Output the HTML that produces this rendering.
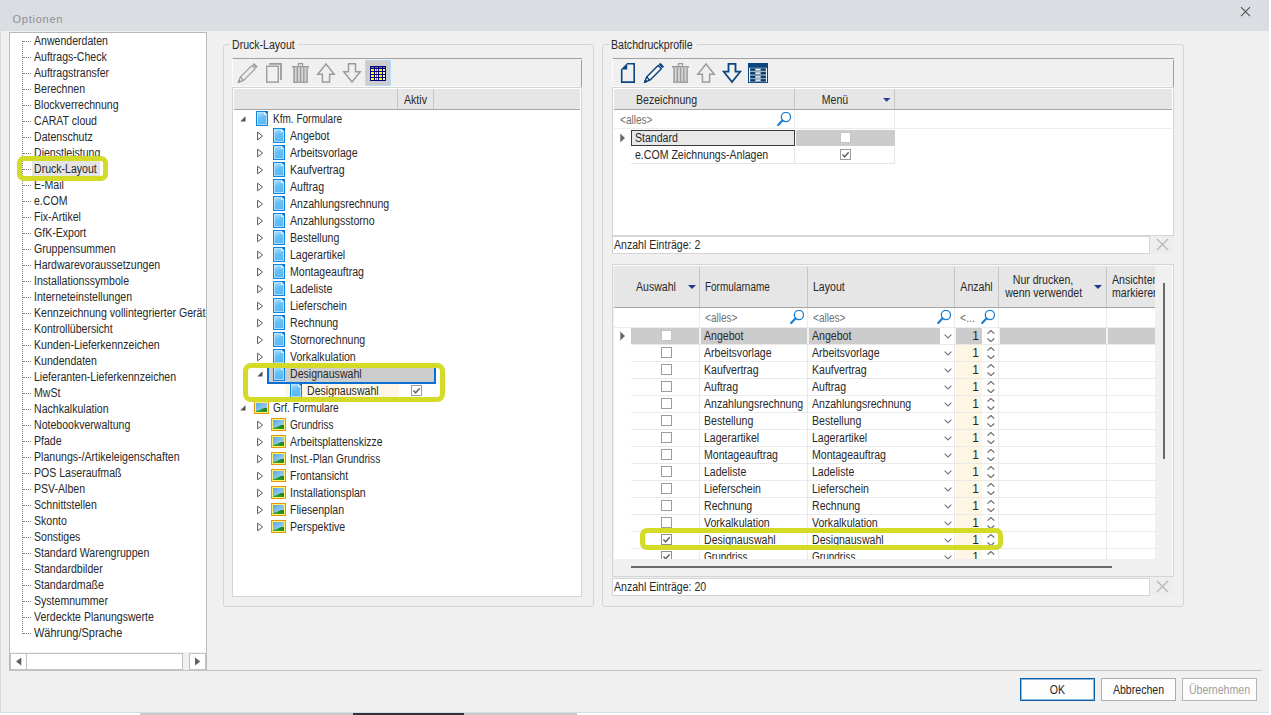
<!DOCTYPE html>
<html lang="de"><head><meta charset="utf-8"><title>Optionen</title>
<style>
html,body{margin:0;padding:0;background:#fff;}
body{width:1271px;height:715px;overflow:hidden;position:relative;font-family:"Liberation Sans",sans-serif;}
#dlg{position:absolute;left:0;top:0;width:1269px;height:713px;background:#f0f0f0;overflow:hidden;box-shadow:inset 1px -1px 0 #d8dbe0;}
#strip{position:absolute;left:140px;top:713px;width:437px;height:2px;background:#c9c9c9;}
#strip i{position:absolute;left:213px;top:0;width:111px;height:2px;background:#30343a;}
#dlg div,#dlg span.t,#dlg svg{position:absolute;box-sizing:border-box;}
span.t{white-space:nowrap;display:block;}

</style></head>
<body>
<div id="dlg">
<svg style="left:0;top:0" width="0" height="0"><defs><linearGradient id="gd" x1="0" y1="0" x2="0.25" y2="1"><stop offset="0" stop-color="#c2e7fc"/><stop offset="0.5" stop-color="#68c1f7"/><stop offset="1" stop-color="#58b8f5"/></linearGradient><linearGradient id="gs" x1="0" y1="0" x2="1" y2="1"><stop offset="0" stop-color="#5aa6e4"/><stop offset="0.5" stop-color="#86c2f0"/><stop offset="1" stop-color="#9fd0f4"/></linearGradient><linearGradient id="gg" x1="0" y1="1" x2="1" y2="0"><stop offset="0" stop-color="#3fb030"/><stop offset="1" stop-color="#0f7a14"/></linearGradient></defs></svg>
<div style="left:0px;top:0px;width:1269px;height:31px;background:#dadde2;"></div>
<span class="t" style="left:12.5px;top:10px;height:18px;line-height:18px;font-size:11px;color:#8f9094;transform:scaleX(1.0);transform-origin:0 0;letter-spacing:0.75px;">Optionen</span>
<svg style="left:1239px;top:6px" width="13" height="12" viewBox="0 0 13 12"><path d="M2 1.2 L11 10.2 M11 1.2 L2 10.2" stroke="#505050" stroke-width="1.1" fill="none"/></svg>
<div style="left:0px;top:31px;width:1px;height:682px;background:#d5d8dd;"></div>
<div style="left:9px;top:32px;width:198px;height:639px;background:#fff;border:1px solid #bababa;"></div>
<div style="left:10px;top:33px;width:196px;height:618px;overflow:hidden;">
<div style="left:12px;top:8px;width:1px;height:593px;border-left:1px dotted #808080;"></div>
<div style="left:13px;top:8px;width:8px;height:1px;border-top:1px dotted #808080;"></div>
<span class="t" style="left:24px;top:0px;height:16px;line-height:16px;font-size:12px;color:#282828;transform:scaleX(0.88);transform-origin:0 0;">Anwenderdaten</span>
<div style="left:13px;top:24px;width:8px;height:1px;border-top:1px dotted #808080;"></div>
<span class="t" style="left:24px;top:16px;height:16px;line-height:16px;font-size:12px;color:#282828;transform:scaleX(0.88);transform-origin:0 0;">Auftrags-Check</span>
<div style="left:13px;top:40px;width:8px;height:1px;border-top:1px dotted #808080;"></div>
<span class="t" style="left:24px;top:32px;height:16px;line-height:16px;font-size:12px;color:#282828;transform:scaleX(0.88);transform-origin:0 0;">Auftragstransfer</span>
<div style="left:13px;top:56px;width:8px;height:1px;border-top:1px dotted #808080;"></div>
<span class="t" style="left:24px;top:48px;height:16px;line-height:16px;font-size:12px;color:#282828;transform:scaleX(0.88);transform-origin:0 0;">Berechnen</span>
<div style="left:13px;top:72px;width:8px;height:1px;border-top:1px dotted #808080;"></div>
<span class="t" style="left:24px;top:64px;height:16px;line-height:16px;font-size:12px;color:#282828;transform:scaleX(0.88);transform-origin:0 0;">Blockverrechnung</span>
<div style="left:13px;top:88px;width:8px;height:1px;border-top:1px dotted #808080;"></div>
<span class="t" style="left:24px;top:80px;height:16px;line-height:16px;font-size:12px;color:#282828;transform:scaleX(0.88);transform-origin:0 0;">CARAT cloud</span>
<div style="left:13px;top:104px;width:8px;height:1px;border-top:1px dotted #808080;"></div>
<span class="t" style="left:24px;top:96px;height:16px;line-height:16px;font-size:12px;color:#282828;transform:scaleX(0.88);transform-origin:0 0;">Datenschutz</span>
<div style="left:13px;top:120px;width:8px;height:1px;border-top:1px dotted #808080;"></div>
<span class="t" style="left:24px;top:112px;height:16px;line-height:16px;font-size:12px;color:#282828;transform:scaleX(0.88);transform-origin:0 0;">Dienstleistung</span>
<div style="left:13px;top:136px;width:8px;height:1px;border-top:1px dotted #808080;"></div>
<div style="left:22px;top:128px;width:68px;height:16px;background:#e4e4e4;"></div>
<span class="t" style="left:24px;top:128px;height:16px;line-height:16px;font-size:12px;color:#282828;transform:scaleX(0.88);transform-origin:0 0;">Druck-Layout</span>
<div style="left:13px;top:152px;width:8px;height:1px;border-top:1px dotted #808080;"></div>
<span class="t" style="left:24px;top:144px;height:16px;line-height:16px;font-size:12px;color:#282828;transform:scaleX(0.88);transform-origin:0 0;">E-Mail</span>
<div style="left:13px;top:168px;width:8px;height:1px;border-top:1px dotted #808080;"></div>
<span class="t" style="left:24px;top:160px;height:16px;line-height:16px;font-size:12px;color:#282828;transform:scaleX(0.88);transform-origin:0 0;">e.COM</span>
<div style="left:13px;top:184px;width:8px;height:1px;border-top:1px dotted #808080;"></div>
<span class="t" style="left:24px;top:176px;height:16px;line-height:16px;font-size:12px;color:#282828;transform:scaleX(0.88);transform-origin:0 0;">Fix-Artikel</span>
<div style="left:13px;top:200px;width:8px;height:1px;border-top:1px dotted #808080;"></div>
<span class="t" style="left:24px;top:192px;height:16px;line-height:16px;font-size:12px;color:#282828;transform:scaleX(0.88);transform-origin:0 0;">GfK-Export</span>
<div style="left:13px;top:216px;width:8px;height:1px;border-top:1px dotted #808080;"></div>
<span class="t" style="left:24px;top:208px;height:16px;line-height:16px;font-size:12px;color:#282828;transform:scaleX(0.88);transform-origin:0 0;">Gruppensummen</span>
<div style="left:13px;top:232px;width:8px;height:1px;border-top:1px dotted #808080;"></div>
<span class="t" style="left:24px;top:224px;height:16px;line-height:16px;font-size:12px;color:#282828;transform:scaleX(0.88);transform-origin:0 0;">Hardwarevoraussetzungen</span>
<div style="left:13px;top:248px;width:8px;height:1px;border-top:1px dotted #808080;"></div>
<span class="t" style="left:24px;top:240px;height:16px;line-height:16px;font-size:12px;color:#282828;transform:scaleX(0.88);transform-origin:0 0;">Installationssymbole</span>
<div style="left:13px;top:264px;width:8px;height:1px;border-top:1px dotted #808080;"></div>
<span class="t" style="left:24px;top:256px;height:16px;line-height:16px;font-size:12px;color:#282828;transform:scaleX(0.88);transform-origin:0 0;">Interneteinstellungen</span>
<div style="left:13px;top:280px;width:8px;height:1px;border-top:1px dotted #808080;"></div>
<span class="t" style="left:24px;top:272px;height:16px;line-height:16px;font-size:12px;color:#282828;transform:scaleX(0.88);transform-origin:0 0;">Kennzeichnung vollintegrierter Geräte</span>
<div style="left:13px;top:296px;width:8px;height:1px;border-top:1px dotted #808080;"></div>
<span class="t" style="left:24px;top:288px;height:16px;line-height:16px;font-size:12px;color:#282828;transform:scaleX(0.88);transform-origin:0 0;">Kontrollübersicht</span>
<div style="left:13px;top:312px;width:8px;height:1px;border-top:1px dotted #808080;"></div>
<span class="t" style="left:24px;top:304px;height:16px;line-height:16px;font-size:12px;color:#282828;transform:scaleX(0.88);transform-origin:0 0;">Kunden-Lieferkennzeichen</span>
<div style="left:13px;top:328px;width:8px;height:1px;border-top:1px dotted #808080;"></div>
<span class="t" style="left:24px;top:320px;height:16px;line-height:16px;font-size:12px;color:#282828;transform:scaleX(0.88);transform-origin:0 0;">Kundendaten</span>
<div style="left:13px;top:344px;width:8px;height:1px;border-top:1px dotted #808080;"></div>
<span class="t" style="left:24px;top:336px;height:16px;line-height:16px;font-size:12px;color:#282828;transform:scaleX(0.88);transform-origin:0 0;">Lieferanten-Lieferkennzeichen</span>
<div style="left:13px;top:360px;width:8px;height:1px;border-top:1px dotted #808080;"></div>
<span class="t" style="left:24px;top:352px;height:16px;line-height:16px;font-size:12px;color:#282828;transform:scaleX(0.88);transform-origin:0 0;">MwSt</span>
<div style="left:13px;top:376px;width:8px;height:1px;border-top:1px dotted #808080;"></div>
<span class="t" style="left:24px;top:368px;height:16px;line-height:16px;font-size:12px;color:#282828;transform:scaleX(0.88);transform-origin:0 0;">Nachkalkulation</span>
<div style="left:13px;top:392px;width:8px;height:1px;border-top:1px dotted #808080;"></div>
<span class="t" style="left:24px;top:384px;height:16px;line-height:16px;font-size:12px;color:#282828;transform:scaleX(0.88);transform-origin:0 0;">Notebookverwaltung</span>
<div style="left:13px;top:408px;width:8px;height:1px;border-top:1px dotted #808080;"></div>
<span class="t" style="left:24px;top:400px;height:16px;line-height:16px;font-size:12px;color:#282828;transform:scaleX(0.88);transform-origin:0 0;">Pfade</span>
<div style="left:13px;top:424px;width:8px;height:1px;border-top:1px dotted #808080;"></div>
<span class="t" style="left:24px;top:416px;height:16px;line-height:16px;font-size:12px;color:#282828;transform:scaleX(0.88);transform-origin:0 0;">Planungs-/Artikeleigenschaften</span>
<div style="left:13px;top:440px;width:8px;height:1px;border-top:1px dotted #808080;"></div>
<span class="t" style="left:24px;top:432px;height:16px;line-height:16px;font-size:12px;color:#282828;transform:scaleX(0.88);transform-origin:0 0;">POS Laseraufmaß</span>
<div style="left:13px;top:456px;width:8px;height:1px;border-top:1px dotted #808080;"></div>
<span class="t" style="left:24px;top:448px;height:16px;line-height:16px;font-size:12px;color:#282828;transform:scaleX(0.88);transform-origin:0 0;">PSV-Alben</span>
<div style="left:13px;top:472px;width:8px;height:1px;border-top:1px dotted #808080;"></div>
<span class="t" style="left:24px;top:464px;height:16px;line-height:16px;font-size:12px;color:#282828;transform:scaleX(0.88);transform-origin:0 0;">Schnittstellen</span>
<div style="left:13px;top:488px;width:8px;height:1px;border-top:1px dotted #808080;"></div>
<span class="t" style="left:24px;top:480px;height:16px;line-height:16px;font-size:12px;color:#282828;transform:scaleX(0.88);transform-origin:0 0;">Skonto</span>
<div style="left:13px;top:504px;width:8px;height:1px;border-top:1px dotted #808080;"></div>
<span class="t" style="left:24px;top:496px;height:16px;line-height:16px;font-size:12px;color:#282828;transform:scaleX(0.88);transform-origin:0 0;">Sonstiges</span>
<div style="left:13px;top:520px;width:8px;height:1px;border-top:1px dotted #808080;"></div>
<span class="t" style="left:24px;top:512px;height:16px;line-height:16px;font-size:12px;color:#282828;transform:scaleX(0.88);transform-origin:0 0;">Standard Warengruppen</span>
<div style="left:13px;top:536px;width:8px;height:1px;border-top:1px dotted #808080;"></div>
<span class="t" style="left:24px;top:528px;height:16px;line-height:16px;font-size:12px;color:#282828;transform:scaleX(0.88);transform-origin:0 0;">Standardbilder</span>
<div style="left:13px;top:552px;width:8px;height:1px;border-top:1px dotted #808080;"></div>
<span class="t" style="left:24px;top:544px;height:16px;line-height:16px;font-size:12px;color:#282828;transform:scaleX(0.88);transform-origin:0 0;">Standardmaße</span>
<div style="left:13px;top:568px;width:8px;height:1px;border-top:1px dotted #808080;"></div>
<span class="t" style="left:24px;top:560px;height:16px;line-height:16px;font-size:12px;color:#282828;transform:scaleX(0.88);transform-origin:0 0;">Systemnummer</span>
<div style="left:13px;top:584px;width:8px;height:1px;border-top:1px dotted #808080;"></div>
<span class="t" style="left:24px;top:576px;height:16px;line-height:16px;font-size:12px;color:#282828;transform:scaleX(0.88);transform-origin:0 0;">Verdeckte Planungswerte</span>
<div style="left:13px;top:600px;width:8px;height:1px;border-top:1px dotted #808080;"></div>
<span class="t" style="left:24px;top:592px;height:16px;line-height:16px;font-size:12px;color:#282828;transform:scaleX(0.913);transform-origin:0 0;">Währung/Sprache</span>
</div>
<div style="left:17px;top:156px;width:91px;height:25px;border:5px solid #d3db26;border-radius:7px;"></div>
<div style="left:10px;top:652px;width:196px;height:18px;background:#f0f0f0;"></div>
<div style="left:10px;top:653px;width:17px;height:17px;background:#fff;border:1px solid #c2c2c2;"></div>
<div style="left:27px;top:653px;width:156px;height:17px;background:#fff;border:1px solid #c2c2c2;border-left:none;"></div>
<div style="left:189px;top:653px;width:17px;height:17px;background:#fff;border:1px solid #c2c2c2;"></div>
<svg style="left:16px;top:657px" width="6" height="9" viewBox="0 0 6 9"><path d="M5.3 0.4 L0 4.5 L5.3 8.6Z" fill="#606060"/></svg>
<svg style="left:195px;top:657px" width="6" height="9" viewBox="0 0 6 9"><path d="M0 0.4 L5.3 4.5 L0 8.6Z" fill="#606060"/></svg>
<div style="left:10px;top:670px;width:1252px;height:1px;background:#c4c4c4;"></div>
<div style="left:1020px;top:678px;width:75px;height:23px;background:#fdfdfd;border:1px solid #0b5fa8;"></div>
<span class="t" style="left:1020px;top:679px;height:23px;line-height:23px;font-size:12px;color:#282828;transform:scaleX(0.88);transform-origin:50% 0;text-align:center;width:75px;">OK</span>
<div style="left:1020px;top:678px;width:75px;height:23px;border:1px solid #0b5fa8;box-shadow:inset 0 0 0 1px rgba(11,95,168,.45);"></div>
<div style="left:1101px;top:678px;width:75px;height:23px;background:#fdfdfd;border:1px solid #adadad;"></div>
<span class="t" style="left:1101px;top:679px;height:23px;line-height:23px;font-size:12px;color:#282828;transform:scaleX(0.88);transform-origin:50% 0;text-align:center;width:75px;">Abbrechen</span>
<div style="left:1182px;top:678px;width:75px;height:23px;background:#fdfdfd;border:1px solid #b4b4b4;"></div>
<span class="t" style="left:1182px;top:679px;height:23px;line-height:23px;font-size:12px;color:#a0a0a0;transform:scaleX(0.88);transform-origin:50% 0;text-align:center;width:75px;">Übernehmen</span>
<div style="left:223px;top:44px;width:371px;height:563px;border:1px solid #d5d5d5;border-radius:3px;"></div>
<div style="left:230px;top:42px;width:68px;height:5px;background:#f0f0f0;"></div>
<span class="t" style="left:232px;top:37px;height:16px;line-height:16px;font-size:12px;color:#282828;transform:scaleX(0.88);transform-origin:0 0;">Druck-Layout</span>
<div style="left:602px;top:44px;width:582px;height:563px;border:1px solid #d5d5d5;border-radius:3px;"></div>
<div style="left:609px;top:42px;width:88px;height:5px;background:#f0f0f0;"></div>
<span class="t" style="left:611px;top:37px;height:16px;line-height:16px;font-size:12px;color:#282828;transform:scaleX(0.88);transform-origin:0 0;">Batchdruckprofile</span>
<div style="left:232px;top:58px;width:350px;height:29px;background:#f0f0f0;border-top:1px solid #a0a0a0;border-left:1px solid #fbfbfb;border-bottom:1px solid #fbfbfb;"></div>
<div style="left:581px;top:60px;width:1px;height:27px;background:#a0a0a0;"></div>
<svg style="left:232px;top:58px" width="350" height="29" viewBox="232 58 350 29"><g transform="translate(238 82.7) rotate(-45)" fill="none" stroke="#9c9c9c" stroke-width="1.3" stroke-linejoin="round"><path d="M0.4 0 L5.6 -2.3 L21.8 -2.3 L21.8 2.3 L5.6 2.3 Z" fill="none"/><path d="M5.6 -2.3 L5.6 2.3" /><path d="M0.4 0 L2.4 -0.9 L2.4 0.9 Z" fill="#9c9c9c"/><rect x="22.9" y="-2.6" width="2.4" height="5.2" fill="#9c9c9c" stroke="none"/></g><path d="M269.1 63.8 H281 V80" fill="none" stroke="#9c9c9c" stroke-width="1.8"/><rect x="266.7" y="66.2" width="11.6" height="15.9" fill="#f0f0f0" stroke="#9c9c9c" stroke-width="1.4"/><rect x="298.5" y="63.6" width="4" height="3" fill="none" stroke="#9c9c9c" stroke-width="1.3"/><rect x="292" y="66" width="17" height="1.7" fill="#9c9c9c"/><rect x="293.4" y="67.7" width="14.4" height="15" fill="#d6d6d6"/><rect x="293.40" y="67.7" width="1.4" height="15" fill="#9c9c9c"/><rect x="296.65" y="67.7" width="1.4" height="15" fill="#9c9c9c"/><rect x="299.90" y="67.7" width="1.4" height="15" fill="#9c9c9c"/><rect x="303.15" y="67.7" width="1.4" height="15" fill="#9c9c9c"/><rect x="306.40" y="67.7" width="1.4" height="15" fill="#9c9c9c"/><rect x="293.4" y="81.5" width="14.4" height="1.3" fill="#9c9c9c"/><path d="M326 64 L334.2 74.3 L329.6 74.3 L329.6 82 L322.4 82 L322.4 74.3 L317.8 74.3 Z" fill="none" stroke="#9c9c9c" stroke-width="1.5" stroke-linejoin="miter"/><path d="M352 82 L360.2 71.7 L355.5 71.7 L355.5 63.8 L348.5 63.8 L348.5 71.7 L343.8 71.7 Z" fill="none" stroke="#9c9c9c" stroke-width="1.5" stroke-linejoin="miter"/><rect x="365.5" y="60.5" width="25" height="25" fill="#cccccc" stroke="#b4dbfa" stroke-width="1"/><rect x="370" y="66" width="16" height="15" fill="#000080"/><rect x="371" y="67.2" width="3" height="0.8" fill="#8a8a9a"/><rect x="371" y="69" width="3" height="2" fill="#ffff00"/><rect x="371" y="72" width="3" height="2" fill="#ffff00"/><rect x="371" y="75" width="3" height="2" fill="#ffff00"/><rect x="371" y="78" width="3" height="2" fill="#ffff00"/><rect x="375" y="67.2" width="3" height="0.8" fill="#8a8a9a"/><rect x="375" y="69" width="3" height="2" fill="#f4f4e6"/><rect x="375" y="72" width="3" height="2" fill="#f4f4e6"/><rect x="375" y="75" width="3" height="2" fill="#f4f4e6"/><rect x="375" y="78" width="3" height="2" fill="#f4f4e6"/><rect x="379" y="67.2" width="3" height="0.8" fill="#8a8a9a"/><rect x="379" y="69" width="3" height="2" fill="#ffff00"/><rect x="379" y="72" width="3" height="2" fill="#ffff00"/><rect x="379" y="75" width="3" height="2" fill="#ffff00"/><rect x="379" y="78" width="3" height="2" fill="#ffff00"/><rect x="383" y="67.2" width="2" height="0.8" fill="#8a8a9a"/><rect x="383" y="69" width="2" height="2" fill="#f4f4e6"/><rect x="383" y="72" width="2" height="2" fill="#f4f4e6"/><rect x="383" y="75" width="2" height="2" fill="#f4f4e6"/><rect x="383" y="78" width="2" height="2" fill="#f4f4e6"/><rect x="376.3" y="69" width="0.5" height="11" fill="#000080"/></svg>
<div style="left:232px;top:87px;width:350px;height:510px;background:#fff;border:1px solid #d4d4d4;"></div>
<div style="left:234px;top:89px;width:346px;height:21px;background:#e6e6e6;border-bottom:1px solid #a6a6a6;"></div>
<div style="left:397px;top:89px;width:1px;height:20px;background:#c6c6c6;"></div>
<div style="left:433px;top:89px;width:1px;height:20px;background:#c6c6c6;"></div>
<span class="t" style="left:397px;top:91px;height:19px;line-height:19px;font-size:12px;color:#282828;transform:scaleX(0.88);transform-origin:50% 0;text-align:center;width:37px;">Aktiv</span>
<svg style="left:256px;top:111px" width="12" height="15" viewBox="0 0 12 15"><rect x="0.5" y="0.5" width="11" height="14" fill="url(#gd)" stroke="#0d86e6" stroke-width="1"/><rect x="1.5" y="1.5" width="9" height="12" fill="none" stroke="#c4e6fc" stroke-width="1" opacity="0.75"/><path d="M8 0 L12 0 L12 4 Z" fill="#0a74d8"/><path d="M8 1 L8 4 L11 4 Z" fill="#dff1fd"/></svg>
<svg style="left:239.5px;top:115.5px" width="6" height="6" viewBox="0 0 6 6"><path d="M5.5 0.3 L5.5 5.5 L0.3 5.5 Z" fill="#505050"/></svg>
<span class="t" style="left:273px;top:111px;height:16px;line-height:16px;font-size:12px;color:#282828;transform:scaleX(0.835);transform-origin:0 0;">Kfm. Formulare</span>
<svg style="left:273px;top:128px" width="12" height="15" viewBox="0 0 12 15"><rect x="0.5" y="0.5" width="11" height="14" fill="url(#gd)" stroke="#0d86e6" stroke-width="1"/><rect x="1.5" y="1.5" width="9" height="12" fill="none" stroke="#c4e6fc" stroke-width="1" opacity="0.75"/><path d="M8 0 L12 0 L12 4 Z" fill="#0a74d8"/><path d="M8 1 L8 4 L11 4 Z" fill="#dff1fd"/></svg>
<svg style="left:257px;top:131px" width="7" height="10" viewBox="0 0 7 10"><path d="M0.6 1.2 L5.6 5 L0.6 8.8 Z" fill="#fff" stroke="#5a5a5a" stroke-width="1"/></svg>
<span class="t" style="left:290px;top:128px;height:16px;line-height:16px;font-size:12px;color:#282828;transform:scaleX(0.88);transform-origin:0 0;">Angebot</span>
<svg style="left:273px;top:145px" width="12" height="15" viewBox="0 0 12 15"><rect x="0.5" y="0.5" width="11" height="14" fill="url(#gd)" stroke="#0d86e6" stroke-width="1"/><rect x="1.5" y="1.5" width="9" height="12" fill="none" stroke="#c4e6fc" stroke-width="1" opacity="0.75"/><path d="M8 0 L12 0 L12 4 Z" fill="#0a74d8"/><path d="M8 1 L8 4 L11 4 Z" fill="#dff1fd"/></svg>
<svg style="left:257px;top:148px" width="7" height="10" viewBox="0 0 7 10"><path d="M0.6 1.2 L5.6 5 L0.6 8.8 Z" fill="#fff" stroke="#5a5a5a" stroke-width="1"/></svg>
<span class="t" style="left:290px;top:145px;height:16px;line-height:16px;font-size:12px;color:#282828;transform:scaleX(0.88);transform-origin:0 0;">Arbeitsvorlage</span>
<svg style="left:273px;top:162px" width="12" height="15" viewBox="0 0 12 15"><rect x="0.5" y="0.5" width="11" height="14" fill="url(#gd)" stroke="#0d86e6" stroke-width="1"/><rect x="1.5" y="1.5" width="9" height="12" fill="none" stroke="#c4e6fc" stroke-width="1" opacity="0.75"/><path d="M8 0 L12 0 L12 4 Z" fill="#0a74d8"/><path d="M8 1 L8 4 L11 4 Z" fill="#dff1fd"/></svg>
<svg style="left:257px;top:165px" width="7" height="10" viewBox="0 0 7 10"><path d="M0.6 1.2 L5.6 5 L0.6 8.8 Z" fill="#fff" stroke="#5a5a5a" stroke-width="1"/></svg>
<span class="t" style="left:290px;top:162px;height:16px;line-height:16px;font-size:12px;color:#282828;transform:scaleX(0.88);transform-origin:0 0;">Kaufvertrag</span>
<svg style="left:273px;top:179px" width="12" height="15" viewBox="0 0 12 15"><rect x="0.5" y="0.5" width="11" height="14" fill="url(#gd)" stroke="#0d86e6" stroke-width="1"/><rect x="1.5" y="1.5" width="9" height="12" fill="none" stroke="#c4e6fc" stroke-width="1" opacity="0.75"/><path d="M8 0 L12 0 L12 4 Z" fill="#0a74d8"/><path d="M8 1 L8 4 L11 4 Z" fill="#dff1fd"/></svg>
<svg style="left:257px;top:182px" width="7" height="10" viewBox="0 0 7 10"><path d="M0.6 1.2 L5.6 5 L0.6 8.8 Z" fill="#fff" stroke="#5a5a5a" stroke-width="1"/></svg>
<span class="t" style="left:290px;top:179px;height:16px;line-height:16px;font-size:12px;color:#282828;transform:scaleX(0.88);transform-origin:0 0;">Auftrag</span>
<svg style="left:273px;top:196px" width="12" height="15" viewBox="0 0 12 15"><rect x="0.5" y="0.5" width="11" height="14" fill="url(#gd)" stroke="#0d86e6" stroke-width="1"/><rect x="1.5" y="1.5" width="9" height="12" fill="none" stroke="#c4e6fc" stroke-width="1" opacity="0.75"/><path d="M8 0 L12 0 L12 4 Z" fill="#0a74d8"/><path d="M8 1 L8 4 L11 4 Z" fill="#dff1fd"/></svg>
<svg style="left:257px;top:199px" width="7" height="10" viewBox="0 0 7 10"><path d="M0.6 1.2 L5.6 5 L0.6 8.8 Z" fill="#fff" stroke="#5a5a5a" stroke-width="1"/></svg>
<span class="t" style="left:290px;top:196px;height:16px;line-height:16px;font-size:12px;color:#282828;transform:scaleX(0.88);transform-origin:0 0;">Anzahlungsrechnung</span>
<svg style="left:273px;top:213px" width="12" height="15" viewBox="0 0 12 15"><rect x="0.5" y="0.5" width="11" height="14" fill="url(#gd)" stroke="#0d86e6" stroke-width="1"/><rect x="1.5" y="1.5" width="9" height="12" fill="none" stroke="#c4e6fc" stroke-width="1" opacity="0.75"/><path d="M8 0 L12 0 L12 4 Z" fill="#0a74d8"/><path d="M8 1 L8 4 L11 4 Z" fill="#dff1fd"/></svg>
<svg style="left:257px;top:216px" width="7" height="10" viewBox="0 0 7 10"><path d="M0.6 1.2 L5.6 5 L0.6 8.8 Z" fill="#fff" stroke="#5a5a5a" stroke-width="1"/></svg>
<span class="t" style="left:290px;top:213px;height:16px;line-height:16px;font-size:12px;color:#282828;transform:scaleX(0.88);transform-origin:0 0;">Anzahlungsstorno</span>
<svg style="left:273px;top:230px" width="12" height="15" viewBox="0 0 12 15"><rect x="0.5" y="0.5" width="11" height="14" fill="url(#gd)" stroke="#0d86e6" stroke-width="1"/><rect x="1.5" y="1.5" width="9" height="12" fill="none" stroke="#c4e6fc" stroke-width="1" opacity="0.75"/><path d="M8 0 L12 0 L12 4 Z" fill="#0a74d8"/><path d="M8 1 L8 4 L11 4 Z" fill="#dff1fd"/></svg>
<svg style="left:257px;top:233px" width="7" height="10" viewBox="0 0 7 10"><path d="M0.6 1.2 L5.6 5 L0.6 8.8 Z" fill="#fff" stroke="#5a5a5a" stroke-width="1"/></svg>
<span class="t" style="left:290px;top:230px;height:16px;line-height:16px;font-size:12px;color:#282828;transform:scaleX(0.88);transform-origin:0 0;">Bestellung</span>
<svg style="left:273px;top:247px" width="12" height="15" viewBox="0 0 12 15"><rect x="0.5" y="0.5" width="11" height="14" fill="url(#gd)" stroke="#0d86e6" stroke-width="1"/><rect x="1.5" y="1.5" width="9" height="12" fill="none" stroke="#c4e6fc" stroke-width="1" opacity="0.75"/><path d="M8 0 L12 0 L12 4 Z" fill="#0a74d8"/><path d="M8 1 L8 4 L11 4 Z" fill="#dff1fd"/></svg>
<svg style="left:257px;top:250px" width="7" height="10" viewBox="0 0 7 10"><path d="M0.6 1.2 L5.6 5 L0.6 8.8 Z" fill="#fff" stroke="#5a5a5a" stroke-width="1"/></svg>
<span class="t" style="left:290px;top:247px;height:16px;line-height:16px;font-size:12px;color:#282828;transform:scaleX(0.88);transform-origin:0 0;">Lagerartikel</span>
<svg style="left:273px;top:264px" width="12" height="15" viewBox="0 0 12 15"><rect x="0.5" y="0.5" width="11" height="14" fill="url(#gd)" stroke="#0d86e6" stroke-width="1"/><rect x="1.5" y="1.5" width="9" height="12" fill="none" stroke="#c4e6fc" stroke-width="1" opacity="0.75"/><path d="M8 0 L12 0 L12 4 Z" fill="#0a74d8"/><path d="M8 1 L8 4 L11 4 Z" fill="#dff1fd"/></svg>
<svg style="left:257px;top:267px" width="7" height="10" viewBox="0 0 7 10"><path d="M0.6 1.2 L5.6 5 L0.6 8.8 Z" fill="#fff" stroke="#5a5a5a" stroke-width="1"/></svg>
<span class="t" style="left:290px;top:264px;height:16px;line-height:16px;font-size:12px;color:#282828;transform:scaleX(0.88);transform-origin:0 0;">Montageauftrag</span>
<svg style="left:273px;top:281px" width="12" height="15" viewBox="0 0 12 15"><rect x="0.5" y="0.5" width="11" height="14" fill="url(#gd)" stroke="#0d86e6" stroke-width="1"/><rect x="1.5" y="1.5" width="9" height="12" fill="none" stroke="#c4e6fc" stroke-width="1" opacity="0.75"/><path d="M8 0 L12 0 L12 4 Z" fill="#0a74d8"/><path d="M8 1 L8 4 L11 4 Z" fill="#dff1fd"/></svg>
<svg style="left:257px;top:284px" width="7" height="10" viewBox="0 0 7 10"><path d="M0.6 1.2 L5.6 5 L0.6 8.8 Z" fill="#fff" stroke="#5a5a5a" stroke-width="1"/></svg>
<span class="t" style="left:290px;top:281px;height:16px;line-height:16px;font-size:12px;color:#282828;transform:scaleX(0.88);transform-origin:0 0;">Ladeliste</span>
<svg style="left:273px;top:298px" width="12" height="15" viewBox="0 0 12 15"><rect x="0.5" y="0.5" width="11" height="14" fill="url(#gd)" stroke="#0d86e6" stroke-width="1"/><rect x="1.5" y="1.5" width="9" height="12" fill="none" stroke="#c4e6fc" stroke-width="1" opacity="0.75"/><path d="M8 0 L12 0 L12 4 Z" fill="#0a74d8"/><path d="M8 1 L8 4 L11 4 Z" fill="#dff1fd"/></svg>
<svg style="left:257px;top:301px" width="7" height="10" viewBox="0 0 7 10"><path d="M0.6 1.2 L5.6 5 L0.6 8.8 Z" fill="#fff" stroke="#5a5a5a" stroke-width="1"/></svg>
<span class="t" style="left:290px;top:298px;height:16px;line-height:16px;font-size:12px;color:#282828;transform:scaleX(0.88);transform-origin:0 0;">Lieferschein</span>
<svg style="left:273px;top:315px" width="12" height="15" viewBox="0 0 12 15"><rect x="0.5" y="0.5" width="11" height="14" fill="url(#gd)" stroke="#0d86e6" stroke-width="1"/><rect x="1.5" y="1.5" width="9" height="12" fill="none" stroke="#c4e6fc" stroke-width="1" opacity="0.75"/><path d="M8 0 L12 0 L12 4 Z" fill="#0a74d8"/><path d="M8 1 L8 4 L11 4 Z" fill="#dff1fd"/></svg>
<svg style="left:257px;top:318px" width="7" height="10" viewBox="0 0 7 10"><path d="M0.6 1.2 L5.6 5 L0.6 8.8 Z" fill="#fff" stroke="#5a5a5a" stroke-width="1"/></svg>
<span class="t" style="left:290px;top:315px;height:16px;line-height:16px;font-size:12px;color:#282828;transform:scaleX(0.88);transform-origin:0 0;">Rechnung</span>
<svg style="left:273px;top:332px" width="12" height="15" viewBox="0 0 12 15"><rect x="0.5" y="0.5" width="11" height="14" fill="url(#gd)" stroke="#0d86e6" stroke-width="1"/><rect x="1.5" y="1.5" width="9" height="12" fill="none" stroke="#c4e6fc" stroke-width="1" opacity="0.75"/><path d="M8 0 L12 0 L12 4 Z" fill="#0a74d8"/><path d="M8 1 L8 4 L11 4 Z" fill="#dff1fd"/></svg>
<svg style="left:257px;top:335px" width="7" height="10" viewBox="0 0 7 10"><path d="M0.6 1.2 L5.6 5 L0.6 8.8 Z" fill="#fff" stroke="#5a5a5a" stroke-width="1"/></svg>
<span class="t" style="left:290px;top:332px;height:16px;line-height:16px;font-size:12px;color:#282828;transform:scaleX(0.88);transform-origin:0 0;">Stornorechnung</span>
<svg style="left:273px;top:349px" width="12" height="15" viewBox="0 0 12 15"><rect x="0.5" y="0.5" width="11" height="14" fill="url(#gd)" stroke="#0d86e6" stroke-width="1"/><rect x="1.5" y="1.5" width="9" height="12" fill="none" stroke="#c4e6fc" stroke-width="1" opacity="0.75"/><path d="M8 0 L12 0 L12 4 Z" fill="#0a74d8"/><path d="M8 1 L8 4 L11 4 Z" fill="#dff1fd"/></svg>
<svg style="left:257px;top:352px" width="7" height="10" viewBox="0 0 7 10"><path d="M0.6 1.2 L5.6 5 L0.6 8.8 Z" fill="#fff" stroke="#5a5a5a" stroke-width="1"/></svg>
<span class="t" style="left:290px;top:349px;height:16px;line-height:16px;font-size:12px;color:#282828;transform:scaleX(0.88);transform-origin:0 0;">Vorkalkulation</span>
<div style="left:267px;top:366px;width:169px;height:18px;background:#cdcdcd;border:2px solid #0b6fd2;border-top:1px solid #3a3a3a;"></div>
<svg style="left:273px;top:366px" width="12" height="15" viewBox="0 0 12 15"><rect x="0.5" y="0.5" width="11" height="14" fill="url(#gd)" stroke="#0d86e6" stroke-width="1"/><rect x="1.5" y="1.5" width="9" height="12" fill="none" stroke="#c4e6fc" stroke-width="1" opacity="0.75"/><path d="M8 0 L12 0 L12 4 Z" fill="#0a74d8"/><path d="M8 1 L8 4 L11 4 Z" fill="#dff1fd"/></svg>
<svg style="left:256.5px;top:370.5px" width="6" height="6" viewBox="0 0 6 6"><path d="M5.5 0.3 L5.5 5.5 L0.3 5.5 Z" fill="#505050"/></svg>
<span class="t" style="left:290px;top:366px;height:16px;line-height:16px;font-size:12px;color:#282828;transform:scaleX(0.88);transform-origin:0 0;">Designauswahl</span>
<div style="left:285px;top:384px;width:114px;height:14px;background:#fdf6e6;"></div>
<svg style="left:290px;top:383px" width="12" height="15" viewBox="0 0 12 15"><rect x="0.5" y="0.5" width="11" height="14" fill="url(#gd)" stroke="#0d86e6" stroke-width="1"/><rect x="1.5" y="1.5" width="9" height="12" fill="none" stroke="#c4e6fc" stroke-width="1" opacity="0.75"/><path d="M8 0 L12 0 L12 4 Z" fill="#0a74d8"/><path d="M8 1 L8 4 L11 4 Z" fill="#dff1fd"/></svg>
<span class="t" style="left:307px;top:383px;height:16px;line-height:16px;font-size:12px;color:#282828;transform:scaleX(0.88);transform-origin:0 0;">Designauswahl</span>
<svg style="left:254px;top:401px" width="15" height="13" viewBox="0 0 15 13"><rect x="0.5" y="0.5" width="14" height="12" fill="#fff26e" stroke="#e6960c" stroke-width="1"/><rect x="2" y="2" width="11" height="9" fill="url(#gs)"/><path d="M2 11 L2 10 Q5.5 9.4 8 7.9 Q10.5 6.4 13 7.2 L13 11 Z" fill="url(#gg)"/></svg>
<svg style="left:239.5px;top:404.5px" width="6" height="6" viewBox="0 0 6 6"><path d="M5.5 0.3 L5.5 5.5 L0.3 5.5 Z" fill="#505050"/></svg>
<span class="t" style="left:273px;top:400px;height:16px;line-height:16px;font-size:12px;color:#282828;transform:scaleX(0.842);transform-origin:0 0;">Grf. Formulare</span>
<svg style="left:271px;top:418px" width="15" height="13" viewBox="0 0 15 13"><rect x="0.5" y="0.5" width="14" height="12" fill="#fff26e" stroke="#e6960c" stroke-width="1"/><rect x="2" y="2" width="11" height="9" fill="url(#gs)"/><path d="M2 11 L2 10 Q5.5 9.4 8 7.9 Q10.5 6.4 13 7.2 L13 11 Z" fill="url(#gg)"/></svg>
<svg style="left:257px;top:420px" width="7" height="10" viewBox="0 0 7 10"><path d="M0.6 1.2 L5.6 5 L0.6 8.8 Z" fill="#fff" stroke="#5a5a5a" stroke-width="1"/></svg>
<span class="t" style="left:290px;top:417px;height:16px;line-height:16px;font-size:12px;color:#282828;transform:scaleX(0.835);transform-origin:0 0;">Grundriss</span>
<svg style="left:271px;top:435px" width="15" height="13" viewBox="0 0 15 13"><rect x="0.5" y="0.5" width="14" height="12" fill="#fff26e" stroke="#e6960c" stroke-width="1"/><rect x="2" y="2" width="11" height="9" fill="url(#gs)"/><path d="M2 11 L2 10 Q5.5 9.4 8 7.9 Q10.5 6.4 13 7.2 L13 11 Z" fill="url(#gg)"/></svg>
<svg style="left:257px;top:437px" width="7" height="10" viewBox="0 0 7 10"><path d="M0.6 1.2 L5.6 5 L0.6 8.8 Z" fill="#fff" stroke="#5a5a5a" stroke-width="1"/></svg>
<span class="t" style="left:290px;top:434px;height:16px;line-height:16px;font-size:12px;color:#282828;transform:scaleX(0.866);transform-origin:0 0;">Arbeitsplattenskizze</span>
<svg style="left:271px;top:452px" width="15" height="13" viewBox="0 0 15 13"><rect x="0.5" y="0.5" width="14" height="12" fill="#fff26e" stroke="#e6960c" stroke-width="1"/><rect x="2" y="2" width="11" height="9" fill="url(#gs)"/><path d="M2 11 L2 10 Q5.5 9.4 8 7.9 Q10.5 6.4 13 7.2 L13 11 Z" fill="url(#gg)"/></svg>
<svg style="left:257px;top:454px" width="7" height="10" viewBox="0 0 7 10"><path d="M0.6 1.2 L5.6 5 L0.6 8.8 Z" fill="#fff" stroke="#5a5a5a" stroke-width="1"/></svg>
<span class="t" style="left:290px;top:451px;height:16px;line-height:16px;font-size:12px;color:#282828;transform:scaleX(0.852);transform-origin:0 0;">Inst.-Plan Grundriss</span>
<svg style="left:271px;top:469px" width="15" height="13" viewBox="0 0 15 13"><rect x="0.5" y="0.5" width="14" height="12" fill="#fff26e" stroke="#e6960c" stroke-width="1"/><rect x="2" y="2" width="11" height="9" fill="url(#gs)"/><path d="M2 11 L2 10 Q5.5 9.4 8 7.9 Q10.5 6.4 13 7.2 L13 11 Z" fill="url(#gg)"/></svg>
<svg style="left:257px;top:471px" width="7" height="10" viewBox="0 0 7 10"><path d="M0.6 1.2 L5.6 5 L0.6 8.8 Z" fill="#fff" stroke="#5a5a5a" stroke-width="1"/></svg>
<span class="t" style="left:290px;top:468px;height:16px;line-height:16px;font-size:12px;color:#282828;transform:scaleX(0.88);transform-origin:0 0;">Frontansicht</span>
<svg style="left:271px;top:486px" width="15" height="13" viewBox="0 0 15 13"><rect x="0.5" y="0.5" width="14" height="12" fill="#fff26e" stroke="#e6960c" stroke-width="1"/><rect x="2" y="2" width="11" height="9" fill="url(#gs)"/><path d="M2 11 L2 10 Q5.5 9.4 8 7.9 Q10.5 6.4 13 7.2 L13 11 Z" fill="url(#gg)"/></svg>
<svg style="left:257px;top:488px" width="7" height="10" viewBox="0 0 7 10"><path d="M0.6 1.2 L5.6 5 L0.6 8.8 Z" fill="#fff" stroke="#5a5a5a" stroke-width="1"/></svg>
<span class="t" style="left:290px;top:485px;height:16px;line-height:16px;font-size:12px;color:#282828;transform:scaleX(0.88);transform-origin:0 0;">Installationsplan</span>
<svg style="left:271px;top:503px" width="15" height="13" viewBox="0 0 15 13"><rect x="0.5" y="0.5" width="14" height="12" fill="#fff26e" stroke="#e6960c" stroke-width="1"/><rect x="2" y="2" width="11" height="9" fill="url(#gs)"/><path d="M2 11 L2 10 Q5.5 9.4 8 7.9 Q10.5 6.4 13 7.2 L13 11 Z" fill="url(#gg)"/></svg>
<svg style="left:257px;top:505px" width="7" height="10" viewBox="0 0 7 10"><path d="M0.6 1.2 L5.6 5 L0.6 8.8 Z" fill="#fff" stroke="#5a5a5a" stroke-width="1"/></svg>
<span class="t" style="left:290px;top:502px;height:16px;line-height:16px;font-size:12px;color:#282828;transform:scaleX(0.88);transform-origin:0 0;">Fliesenplan</span>
<svg style="left:271px;top:520px" width="15" height="13" viewBox="0 0 15 13"><rect x="0.5" y="0.5" width="14" height="12" fill="#fff26e" stroke="#e6960c" stroke-width="1"/><rect x="2" y="2" width="11" height="9" fill="url(#gs)"/><path d="M2 11 L2 10 Q5.5 9.4 8 7.9 Q10.5 6.4 13 7.2 L13 11 Z" fill="url(#gg)"/></svg>
<svg style="left:257px;top:522px" width="7" height="10" viewBox="0 0 7 10"><path d="M0.6 1.2 L5.6 5 L0.6 8.8 Z" fill="#fff" stroke="#5a5a5a" stroke-width="1"/></svg>
<span class="t" style="left:290px;top:519px;height:16px;line-height:16px;font-size:12px;color:#282828;transform:scaleX(0.88);transform-origin:0 0;">Perspektive</span>
<svg style="left:411px;top:385px" width="11" height="11" viewBox="0 0 11 11"><rect x="0.5" y="0.5" width="10" height="10" fill="#fff" stroke="#9c9c9c" stroke-width="1"/><path d="M2.4 5.5 L4.6 7.8 L8.7 3.2" fill="none" stroke="#686868" stroke-width="1.5"/></svg>
<div style="left:243px;top:363px;width:202px;height:39px;border:5px solid #d3db26;border-radius:8px;"></div>
<div style="left:612px;top:58px;width:562px;height:29px;background:#f0f0f0;border-top:1px solid #a0a0a0;border-left:1px solid #fbfbfb;border-bottom:1px solid #fbfbfb;"></div>
<div style="left:1173px;top:60px;width:1px;height:27px;background:#a0a0a0;"></div>
<svg style="left:612px;top:58px" width="562" height="29" viewBox="612 58 562 29"><path d="M627 63.8 L634.2 63.8 L634.2 82.1 L621.7 82.1 L621.7 69.2" fill="none" stroke="#0b467e" stroke-width="1.6" stroke-linejoin="miter"/><path d="M620.9 69.6 L627.2 63 L627.2 69.6 Z" fill="#0b467e"/><g transform="translate(644.3 82.5) rotate(-45)" fill="none" stroke="#0b467e" stroke-width="1.45" stroke-linejoin="round"><path d="M0.4 0 L5.6 -2.3 L21.8 -2.3 L21.8 2.3 L5.6 2.3 Z" fill="#f8f8f8"/><path d="M5.6 -2.3 L5.6 2.3" /><path d="M0.4 0 L2.4 -0.9 L2.4 0.9 Z" fill="#0b467e"/><rect x="22.9" y="-2.6" width="2.4" height="5.2" fill="#0b467e" stroke="none"/></g><rect x="678.5" y="63.6" width="4" height="3" fill="none" stroke="#9c9c9c" stroke-width="1.3"/><rect x="672" y="66" width="17" height="1.7" fill="#9c9c9c"/><rect x="673.4" y="67.7" width="14.4" height="15" fill="#d6d6d6"/><rect x="673.40" y="67.7" width="1.4" height="15" fill="#9c9c9c"/><rect x="676.65" y="67.7" width="1.4" height="15" fill="#9c9c9c"/><rect x="679.90" y="67.7" width="1.4" height="15" fill="#9c9c9c"/><rect x="683.15" y="67.7" width="1.4" height="15" fill="#9c9c9c"/><rect x="686.40" y="67.7" width="1.4" height="15" fill="#9c9c9c"/><rect x="673.4" y="81.5" width="14.4" height="1.3" fill="#9c9c9c"/><path d="M706 64 L714.2 74.3 L709.6 74.3 L709.6 82 L702.4 82 L702.4 74.3 L697.8 74.3 Z" fill="none" stroke="#9c9c9c" stroke-width="1.5" stroke-linejoin="miter"/><path d="M732 82 L740.2 71.7 L735.5 71.7 L735.5 63.8 L728.5 63.8 L728.5 71.7 L723.8 71.7 Z" fill="none" stroke="#0b467e" stroke-width="1.8" stroke-linejoin="miter"/><rect x="748" y="63" width="20" height="20" fill="#0b467e"/><rect x="749" y="67.6" width="18" height="14.6" fill="#7d96b2"/><rect x="749.1" y="68" width="1" height="14" fill="#fff"/><rect x="765.9" y="68" width="1" height="14" fill="#fff"/><rect x="750.2" y="68.6" width="4.9" height="2.1" fill="#06396e"/><rect x="760.9" y="68.6" width="4.9" height="2.1" fill="#06396e"/><rect x="755.7" y="69.0" width="4.6" height="1.2" fill="#fff"/><rect x="750.2" y="72.1" width="4.9" height="2.1" fill="#06396e"/><rect x="760.9" y="72.1" width="4.9" height="2.1" fill="#06396e"/><rect x="755.7" y="72.5" width="4.6" height="1.2" fill="#fff"/><rect x="750.2" y="75.9" width="4.9" height="2.1" fill="#06396e"/><rect x="760.9" y="75.9" width="4.9" height="2.1" fill="#06396e"/><rect x="755.7" y="76.3" width="4.6" height="1.2" fill="#fff"/><rect x="750.2" y="79.2" width="4.9" height="2.1" fill="#06396e"/><rect x="760.9" y="79.2" width="4.9" height="2.1" fill="#06396e"/><rect x="755.7" y="79.6" width="4.6" height="1.2" fill="#fff"/><rect x="750.2" y="70.9" width="15.6" height="1" fill="#a4b4c6"/><rect x="750.2" y="78.2" width="15.6" height="0.8" fill="#a4b4c6"/></svg>
<div style="left:612px;top:87px;width:562px;height:149px;background:#fff;border:1px solid #d4d4d4;"></div>
<div style="left:614px;top:89px;width:558px;height:21px;background:#e6e6e6;border-bottom:1px solid #a6a6a6;"></div>
<div style="left:794px;top:89px;width:1px;height:20px;background:#c6c6c6;"></div>
<div style="left:894px;top:89px;width:1px;height:20px;background:#c6c6c6;"></div>
<span class="t" style="left:636px;top:91px;height:18px;line-height:18px;font-size:12px;color:#282828;transform:scaleX(0.88);transform-origin:0 0;">Bezeichnung</span>
<span class="t" style="left:796px;top:91px;height:18px;line-height:18px;font-size:12px;color:#282828;transform:scaleX(0.88);transform-origin:50% 0;text-align:center;width:78px;">Menü</span>
<svg style="left:883px;top:97.5px" width="8" height="4" viewBox="0 0 8 4"><path d="M0 0 L7.4 0 L3.7 3.8 Z" fill="#24408c"/></svg>
<div style="left:614px;top:128px;width:558px;height:1px;background:#ececec;"></div>
<div style="left:794px;top:110px;width:1px;height:18px;background:#ececec;"></div>
<div style="left:894px;top:110px;width:1px;height:18px;background:#ececec;"></div>
<span class="t" style="left:620px;top:112px;height:16px;line-height:16px;font-size:12px;color:#707070;transform:scaleX(0.84);transform-origin:0 0;">&lt;alles&gt;</span>
<svg style="left:777px;top:112px" width="14" height="14" viewBox="0 0 14 14"><circle cx="8.9" cy="5.0" r="4.6" fill="#fff" stroke="#1b7fd4" stroke-width="1.25"/><path d="M5.4 8.6 L1.2 12.9" stroke="#1b7fd4" stroke-width="2.2" stroke-linecap="round"/></svg>
<svg style="left:620px;top:133px" width="7" height="10" viewBox="0 0 7 10"><path d="M0.3 0.6 L5 5 L0.3 9.4 Z" fill="#686868"/></svg>
<div style="left:631px;top:130px;width:164px;height:16px;background:#e8e8e8;border:1px solid #3a3a3a;"></div>
<div style="left:796px;top:130px;width:99px;height:16px;background:#cccccc;"></div>
<span class="t" style="left:635px;top:130px;height:16px;line-height:16px;font-size:12px;color:#282828;transform:scaleX(0.88);transform-origin:0 0;">Standard</span>
<svg style="left:840px;top:132px" width="11" height="11" viewBox="0 0 11 11"><rect x="0.5" y="0.5" width="10" height="10" fill="#fff" stroke="#c4c4c4" stroke-width="1"/></svg>
<div style="left:631px;top:163px;width:264px;height:1px;background:#e6e6e6;"></div>
<div style="left:794px;top:147px;width:1px;height:17px;background:#e6e6e6;"></div>
<div style="left:894px;top:147px;width:1px;height:17px;background:#e6e6e6;"></div>
<span class="t" style="left:635px;top:147px;height:16px;line-height:16px;font-size:12px;color:#282828;transform:scaleX(0.88);transform-origin:0 0;">e.COM Zeichnungs-Anlagen</span>
<svg style="left:840px;top:149px" width="11" height="11" viewBox="0 0 11 11"><rect x="0.5" y="0.5" width="10" height="10" fill="#fff" stroke="#9a9a9a" stroke-width="1"/><path d="M2.4 5.5 L4.6 7.8 L8.7 3.2" fill="none" stroke="#686868" stroke-width="1.5"/></svg>
<div style="left:612px;top:236px;width:538px;height:18px;background:#fff;border:1px solid #d4d4d4;"></div>
<span class="t" style="left:614px;top:237px;height:17px;line-height:17px;font-size:12px;color:#282828;transform:scaleX(0.88);transform-origin:0 0;">Anzahl Einträge: 2</span>
<div style="left:1152px;top:236px;width:21px;height:17px;background:#ededed;"></div>
<svg style="left:1156px;top:238px" width="13" height="13" viewBox="0 0 13 13"><path d="M1 1 L12 12 M12 1 L1 12" stroke="#b5b5b5" stroke-width="1.2" fill="none"/></svg>
<div style="left:612px;top:578px;width:538px;height:18px;background:#fff;border:1px solid #d4d4d4;"></div>
<span class="t" style="left:614px;top:579px;height:17px;line-height:17px;font-size:12px;color:#282828;transform:scaleX(0.88);transform-origin:0 0;">Anzahl Einträge: 20</span>
<div style="left:1152px;top:578px;width:21px;height:17px;background:#ededed;"></div>
<svg style="left:1156px;top:580px" width="13" height="13" viewBox="0 0 13 13"><path d="M1 1 L12 12 M12 1 L1 12" stroke="#b5b5b5" stroke-width="1.2" fill="none"/></svg>
<div style="left:612px;top:264px;width:562px;height:313px;background:#f0f0f0;border:1px solid #d4d4d4;box-shadow:inset -1px 1px 0 #fafafa;"></div>
<div style="left:614px;top:266px;width:541px;height:293px;overflow:hidden;background:#fff;">
<div style="left:0px;top:0px;width:541px;height:42px;background:#e6e6e6;border-bottom:1px solid #a6a6a6;"></div>
<div style="left:85px;top:1px;width:1px;height:40px;background:#c6c6c6;"></div>
<div style="left:193px;top:1px;width:1px;height:40px;background:#c6c6c6;"></div>
<div style="left:340px;top:1px;width:1px;height:40px;background:#c6c6c6;"></div>
<div style="left:384px;top:1px;width:1px;height:40px;background:#c6c6c6;"></div>
<div style="left:492px;top:1px;width:1px;height:40px;background:#c6c6c6;"></div>
<span class="t" style="left:22px;top:12px;height:18px;line-height:18px;font-size:12px;color:#282828;transform:scaleX(0.88);transform-origin:0 0;">Auswahl</span>
<span class="t" style="left:91px;top:12px;height:18px;line-height:18px;font-size:12px;color:#282828;transform:scaleX(0.83);transform-origin:0 0;">Formularname</span>
<span class="t" style="left:199px;top:12px;height:18px;line-height:18px;font-size:12px;color:#282828;transform:scaleX(0.88);transform-origin:0 0;">Layout</span>
<span class="t" style="left:341px;top:12px;height:18px;line-height:18px;font-size:12px;color:#282828;transform:scaleX(0.88);transform-origin:50% 0;text-align:center;width:43px;">Anzahl</span>
<span class="t" style="left:386px;top:7px;height:15px;line-height:15px;font-size:12px;color:#282828;transform:scaleX(0.88);transform-origin:50% 0;text-align:center;width:86px;">Nur drucken,</span>
<span class="t" style="left:386px;top:20px;height:15px;line-height:15px;font-size:12px;color:#282828;transform:scaleX(0.88);transform-origin:50% 0;text-align:center;width:86px;">wenn verwendet</span>
<span class="t" style="left:498px;top:7px;height:15px;line-height:15px;font-size:12px;color:#282828;transform:scaleX(0.88);transform-origin:0 0;">Ansichten</span>
<span class="t" style="left:498px;top:20px;height:15px;line-height:15px;font-size:12px;color:#282828;transform:scaleX(0.88);transform-origin:0 0;">markieren</span>
<svg style="left:74px;top:19px" width="8" height="4" viewBox="0 0 8 4"><path d="M0 0 L8 0 L4 4 Z" fill="#1e3c86"/></svg>
<svg style="left:480px;top:19px" width="8" height="4" viewBox="0 0 8 4"><path d="M0 0 L8 0 L4 4 Z" fill="#1e3c86"/></svg>
<div style="left:86px;top:42px;width:455px;height:19px;background:#fff;"></div>
<div style="left:0px;top:61px;width:541px;height:1px;background:#ececec;"></div>
<div style="left:85px;top:42px;width:1px;height:19px;background:#ececec;"></div>
<div style="left:193px;top:42px;width:1px;height:19px;background:#ececec;"></div>
<div style="left:340px;top:42px;width:1px;height:19px;background:#ececec;"></div>
<div style="left:384px;top:42px;width:1px;height:19px;background:#ececec;"></div>
<div style="left:492px;top:42px;width:1px;height:19px;background:#ececec;"></div>
<span class="t" style="left:91px;top:44px;height:17px;line-height:17px;font-size:12px;color:#707070;transform:scaleX(0.84);transform-origin:0 0;">&lt;alles&gt;</span>
<span class="t" style="left:199px;top:44px;height:17px;line-height:17px;font-size:12px;color:#707070;transform:scaleX(0.84);transform-origin:0 0;">&lt;alles&gt;</span>
<span class="t" style="left:346px;top:44px;height:17px;line-height:17px;font-size:12px;color:#707070;transform:scaleX(0.88);transform-origin:0 0;">&lt;...</span>
<svg style="left:176px;top:44px" width="14" height="14" viewBox="0 0 14 14"><circle cx="8.9" cy="5.0" r="4.6" fill="#fff" stroke="#1b7fd4" stroke-width="1.25"/><path d="M5.4 8.6 L1.2 12.9" stroke="#1b7fd4" stroke-width="2.2" stroke-linecap="round"/></svg>
<svg style="left:323px;top:44px" width="14" height="14" viewBox="0 0 14 14"><circle cx="8.9" cy="5.0" r="4.6" fill="#fff" stroke="#1b7fd4" stroke-width="1.25"/><path d="M5.4 8.6 L1.2 12.9" stroke="#1b7fd4" stroke-width="2.2" stroke-linecap="round"/></svg>
<svg style="left:367px;top:44px" width="14" height="14" viewBox="0 0 14 14"><circle cx="8.9" cy="5.0" r="4.6" fill="#fff" stroke="#1b7fd4" stroke-width="1.25"/><path d="M5.4 8.6 L1.2 12.9" stroke="#1b7fd4" stroke-width="2.2" stroke-linecap="round"/></svg>
<div style="left:17px;top:62px;width:524px;height:16px;background:#cccccc;"></div>
<div style="left:85px;top:62px;width:2px;height:16px;background:#f3f3f3;"></div>
<div style="left:193px;top:62px;width:2px;height:16px;background:#f3f3f3;"></div>
<div style="left:340px;top:62px;width:2px;height:16px;background:#f3f3f3;"></div>
<div style="left:384px;top:62px;width:2px;height:16px;background:#f3f3f3;"></div>
<div style="left:492px;top:62px;width:2px;height:16px;background:#f3f3f3;"></div>
<div style="left:326px;top:62px;width:14px;height:16px;background:#fff;"></div>
<div style="left:368px;top:62px;width:16px;height:16px;background:#fff;"></div>
<div style="left:17px;top:78px;width:524px;height:1px;background:#e9e9e9;"></div>
<svg style="left:47px;top:64px" width="11" height="11" viewBox="0 0 11 11"><rect x="0.5" y="0.5" width="10" height="10" fill="#fff" stroke="#c4c4c4" stroke-width="1"/></svg>
<span class="t" style="left:90px;top:62px;height:16px;line-height:16px;font-size:12px;color:#282828;transform:scaleX(0.88);transform-origin:0 0;">Angebot</span>
<span class="t" style="left:198px;top:62px;height:16px;line-height:16px;font-size:12px;color:#282828;transform:scaleX(0.88);transform-origin:0 0;">Angebot</span>
<span class="t" style="left:346px;top:62px;height:16px;line-height:16px;font-size:12px;color:#282828;transform:scaleX(1.0);transform-origin:100% 0;text-align:right;width:19px;">1</span>
<svg style="left:330px;top:68px" width="8" height="5" viewBox="0 0 8 5"><path d="M0.6 0.6 L4 4 L7.4 0.6" fill="none" stroke="#787878" stroke-width="1.15"/></svg>
<svg style="left:373px;top:64px" width="8" height="12" viewBox="0 0 8 12"><path d="M0.5 3.6 L3.9 0.5 L7.3 3.6 M0.5 8.5 L3.9 11.6 L7.3 8.5" fill="none" stroke="#686868" stroke-width="1.15"/></svg>
<div style="left:342px;top:79px;width:26px;height:16px;background:#fdf6e4;"></div>
<div style="left:17px;top:95px;width:524px;height:1px;background:#e9e9e9;"></div>
<div style="left:85px;top:79px;width:1px;height:17px;background:#e9e9e9;"></div>
<div style="left:193px;top:79px;width:1px;height:17px;background:#e9e9e9;"></div>
<div style="left:340px;top:79px;width:1px;height:17px;background:#e9e9e9;"></div>
<div style="left:384px;top:79px;width:1px;height:17px;background:#e9e9e9;"></div>
<div style="left:492px;top:79px;width:1px;height:17px;background:#e9e9e9;"></div>
<svg style="left:47px;top:81px" width="11" height="11" viewBox="0 0 11 11"><rect x="0.5" y="0.5" width="10" height="10" fill="#fff" stroke="#9c9c9c" stroke-width="1"/></svg>
<span class="t" style="left:90px;top:79px;height:16px;line-height:16px;font-size:12px;color:#282828;transform:scaleX(0.88);transform-origin:0 0;">Arbeitsvorlage</span>
<span class="t" style="left:198px;top:79px;height:16px;line-height:16px;font-size:12px;color:#282828;transform:scaleX(0.88);transform-origin:0 0;">Arbeitsvorlage</span>
<span class="t" style="left:346px;top:79px;height:16px;line-height:16px;font-size:12px;color:#282828;transform:scaleX(1.0);transform-origin:100% 0;text-align:right;width:19px;">1</span>
<svg style="left:330px;top:85px" width="8" height="5" viewBox="0 0 8 5"><path d="M0.6 0.6 L4 4 L7.4 0.6" fill="none" stroke="#787878" stroke-width="1.15"/></svg>
<svg style="left:373px;top:81px" width="8" height="12" viewBox="0 0 8 12"><path d="M0.5 3.6 L3.9 0.5 L7.3 3.6 M0.5 8.5 L3.9 11.6 L7.3 8.5" fill="none" stroke="#686868" stroke-width="1.15"/></svg>
<div style="left:342px;top:96px;width:26px;height:16px;background:#fdf6e4;"></div>
<div style="left:17px;top:112px;width:524px;height:1px;background:#e9e9e9;"></div>
<div style="left:85px;top:96px;width:1px;height:17px;background:#e9e9e9;"></div>
<div style="left:193px;top:96px;width:1px;height:17px;background:#e9e9e9;"></div>
<div style="left:340px;top:96px;width:1px;height:17px;background:#e9e9e9;"></div>
<div style="left:384px;top:96px;width:1px;height:17px;background:#e9e9e9;"></div>
<div style="left:492px;top:96px;width:1px;height:17px;background:#e9e9e9;"></div>
<svg style="left:47px;top:98px" width="11" height="11" viewBox="0 0 11 11"><rect x="0.5" y="0.5" width="10" height="10" fill="#fff" stroke="#9c9c9c" stroke-width="1"/></svg>
<span class="t" style="left:90px;top:96px;height:16px;line-height:16px;font-size:12px;color:#282828;transform:scaleX(0.88);transform-origin:0 0;">Kaufvertrag</span>
<span class="t" style="left:198px;top:96px;height:16px;line-height:16px;font-size:12px;color:#282828;transform:scaleX(0.88);transform-origin:0 0;">Kaufvertrag</span>
<span class="t" style="left:346px;top:96px;height:16px;line-height:16px;font-size:12px;color:#282828;transform:scaleX(1.0);transform-origin:100% 0;text-align:right;width:19px;">1</span>
<svg style="left:330px;top:102px" width="8" height="5" viewBox="0 0 8 5"><path d="M0.6 0.6 L4 4 L7.4 0.6" fill="none" stroke="#787878" stroke-width="1.15"/></svg>
<svg style="left:373px;top:98px" width="8" height="12" viewBox="0 0 8 12"><path d="M0.5 3.6 L3.9 0.5 L7.3 3.6 M0.5 8.5 L3.9 11.6 L7.3 8.5" fill="none" stroke="#686868" stroke-width="1.15"/></svg>
<div style="left:342px;top:113px;width:26px;height:16px;background:#fdf6e4;"></div>
<div style="left:17px;top:129px;width:524px;height:1px;background:#e9e9e9;"></div>
<div style="left:85px;top:113px;width:1px;height:17px;background:#e9e9e9;"></div>
<div style="left:193px;top:113px;width:1px;height:17px;background:#e9e9e9;"></div>
<div style="left:340px;top:113px;width:1px;height:17px;background:#e9e9e9;"></div>
<div style="left:384px;top:113px;width:1px;height:17px;background:#e9e9e9;"></div>
<div style="left:492px;top:113px;width:1px;height:17px;background:#e9e9e9;"></div>
<svg style="left:47px;top:115px" width="11" height="11" viewBox="0 0 11 11"><rect x="0.5" y="0.5" width="10" height="10" fill="#fff" stroke="#9c9c9c" stroke-width="1"/></svg>
<span class="t" style="left:90px;top:113px;height:16px;line-height:16px;font-size:12px;color:#282828;transform:scaleX(0.88);transform-origin:0 0;">Auftrag</span>
<span class="t" style="left:198px;top:113px;height:16px;line-height:16px;font-size:12px;color:#282828;transform:scaleX(0.88);transform-origin:0 0;">Auftrag</span>
<span class="t" style="left:346px;top:113px;height:16px;line-height:16px;font-size:12px;color:#282828;transform:scaleX(1.0);transform-origin:100% 0;text-align:right;width:19px;">1</span>
<svg style="left:330px;top:119px" width="8" height="5" viewBox="0 0 8 5"><path d="M0.6 0.6 L4 4 L7.4 0.6" fill="none" stroke="#787878" stroke-width="1.15"/></svg>
<svg style="left:373px;top:115px" width="8" height="12" viewBox="0 0 8 12"><path d="M0.5 3.6 L3.9 0.5 L7.3 3.6 M0.5 8.5 L3.9 11.6 L7.3 8.5" fill="none" stroke="#686868" stroke-width="1.15"/></svg>
<div style="left:342px;top:130px;width:26px;height:16px;background:#fdf6e4;"></div>
<div style="left:17px;top:146px;width:524px;height:1px;background:#e9e9e9;"></div>
<div style="left:85px;top:130px;width:1px;height:17px;background:#e9e9e9;"></div>
<div style="left:193px;top:130px;width:1px;height:17px;background:#e9e9e9;"></div>
<div style="left:340px;top:130px;width:1px;height:17px;background:#e9e9e9;"></div>
<div style="left:384px;top:130px;width:1px;height:17px;background:#e9e9e9;"></div>
<div style="left:492px;top:130px;width:1px;height:17px;background:#e9e9e9;"></div>
<svg style="left:47px;top:132px" width="11" height="11" viewBox="0 0 11 11"><rect x="0.5" y="0.5" width="10" height="10" fill="#fff" stroke="#9c9c9c" stroke-width="1"/></svg>
<span class="t" style="left:90px;top:130px;height:16px;line-height:16px;font-size:12px;color:#282828;transform:scaleX(0.88);transform-origin:0 0;">Anzahlungsrechnung</span>
<span class="t" style="left:198px;top:130px;height:16px;line-height:16px;font-size:12px;color:#282828;transform:scaleX(0.88);transform-origin:0 0;">Anzahlungsrechnung</span>
<span class="t" style="left:346px;top:130px;height:16px;line-height:16px;font-size:12px;color:#282828;transform:scaleX(1.0);transform-origin:100% 0;text-align:right;width:19px;">1</span>
<svg style="left:330px;top:136px" width="8" height="5" viewBox="0 0 8 5"><path d="M0.6 0.6 L4 4 L7.4 0.6" fill="none" stroke="#787878" stroke-width="1.15"/></svg>
<svg style="left:373px;top:132px" width="8" height="12" viewBox="0 0 8 12"><path d="M0.5 3.6 L3.9 0.5 L7.3 3.6 M0.5 8.5 L3.9 11.6 L7.3 8.5" fill="none" stroke="#686868" stroke-width="1.15"/></svg>
<div style="left:342px;top:147px;width:26px;height:16px;background:#fdf6e4;"></div>
<div style="left:17px;top:163px;width:524px;height:1px;background:#e9e9e9;"></div>
<div style="left:85px;top:147px;width:1px;height:17px;background:#e9e9e9;"></div>
<div style="left:193px;top:147px;width:1px;height:17px;background:#e9e9e9;"></div>
<div style="left:340px;top:147px;width:1px;height:17px;background:#e9e9e9;"></div>
<div style="left:384px;top:147px;width:1px;height:17px;background:#e9e9e9;"></div>
<div style="left:492px;top:147px;width:1px;height:17px;background:#e9e9e9;"></div>
<svg style="left:47px;top:149px" width="11" height="11" viewBox="0 0 11 11"><rect x="0.5" y="0.5" width="10" height="10" fill="#fff" stroke="#9c9c9c" stroke-width="1"/></svg>
<span class="t" style="left:90px;top:147px;height:16px;line-height:16px;font-size:12px;color:#282828;transform:scaleX(0.88);transform-origin:0 0;">Bestellung</span>
<span class="t" style="left:198px;top:147px;height:16px;line-height:16px;font-size:12px;color:#282828;transform:scaleX(0.88);transform-origin:0 0;">Bestellung</span>
<span class="t" style="left:346px;top:147px;height:16px;line-height:16px;font-size:12px;color:#282828;transform:scaleX(1.0);transform-origin:100% 0;text-align:right;width:19px;">1</span>
<svg style="left:330px;top:153px" width="8" height="5" viewBox="0 0 8 5"><path d="M0.6 0.6 L4 4 L7.4 0.6" fill="none" stroke="#787878" stroke-width="1.15"/></svg>
<svg style="left:373px;top:149px" width="8" height="12" viewBox="0 0 8 12"><path d="M0.5 3.6 L3.9 0.5 L7.3 3.6 M0.5 8.5 L3.9 11.6 L7.3 8.5" fill="none" stroke="#686868" stroke-width="1.15"/></svg>
<div style="left:342px;top:164px;width:26px;height:16px;background:#fdf6e4;"></div>
<div style="left:17px;top:180px;width:524px;height:1px;background:#e9e9e9;"></div>
<div style="left:85px;top:164px;width:1px;height:17px;background:#e9e9e9;"></div>
<div style="left:193px;top:164px;width:1px;height:17px;background:#e9e9e9;"></div>
<div style="left:340px;top:164px;width:1px;height:17px;background:#e9e9e9;"></div>
<div style="left:384px;top:164px;width:1px;height:17px;background:#e9e9e9;"></div>
<div style="left:492px;top:164px;width:1px;height:17px;background:#e9e9e9;"></div>
<svg style="left:47px;top:166px" width="11" height="11" viewBox="0 0 11 11"><rect x="0.5" y="0.5" width="10" height="10" fill="#fff" stroke="#9c9c9c" stroke-width="1"/></svg>
<span class="t" style="left:90px;top:164px;height:16px;line-height:16px;font-size:12px;color:#282828;transform:scaleX(0.88);transform-origin:0 0;">Lagerartikel</span>
<span class="t" style="left:198px;top:164px;height:16px;line-height:16px;font-size:12px;color:#282828;transform:scaleX(0.88);transform-origin:0 0;">Lagerartikel</span>
<span class="t" style="left:346px;top:164px;height:16px;line-height:16px;font-size:12px;color:#282828;transform:scaleX(1.0);transform-origin:100% 0;text-align:right;width:19px;">1</span>
<svg style="left:330px;top:170px" width="8" height="5" viewBox="0 0 8 5"><path d="M0.6 0.6 L4 4 L7.4 0.6" fill="none" stroke="#787878" stroke-width="1.15"/></svg>
<svg style="left:373px;top:166px" width="8" height="12" viewBox="0 0 8 12"><path d="M0.5 3.6 L3.9 0.5 L7.3 3.6 M0.5 8.5 L3.9 11.6 L7.3 8.5" fill="none" stroke="#686868" stroke-width="1.15"/></svg>
<div style="left:342px;top:181px;width:26px;height:16px;background:#fdf6e4;"></div>
<div style="left:17px;top:197px;width:524px;height:1px;background:#e9e9e9;"></div>
<div style="left:85px;top:181px;width:1px;height:17px;background:#e9e9e9;"></div>
<div style="left:193px;top:181px;width:1px;height:17px;background:#e9e9e9;"></div>
<div style="left:340px;top:181px;width:1px;height:17px;background:#e9e9e9;"></div>
<div style="left:384px;top:181px;width:1px;height:17px;background:#e9e9e9;"></div>
<div style="left:492px;top:181px;width:1px;height:17px;background:#e9e9e9;"></div>
<svg style="left:47px;top:183px" width="11" height="11" viewBox="0 0 11 11"><rect x="0.5" y="0.5" width="10" height="10" fill="#fff" stroke="#9c9c9c" stroke-width="1"/></svg>
<span class="t" style="left:90px;top:181px;height:16px;line-height:16px;font-size:12px;color:#282828;transform:scaleX(0.88);transform-origin:0 0;">Montageauftrag</span>
<span class="t" style="left:198px;top:181px;height:16px;line-height:16px;font-size:12px;color:#282828;transform:scaleX(0.88);transform-origin:0 0;">Montageauftrag</span>
<span class="t" style="left:346px;top:181px;height:16px;line-height:16px;font-size:12px;color:#282828;transform:scaleX(1.0);transform-origin:100% 0;text-align:right;width:19px;">1</span>
<svg style="left:330px;top:187px" width="8" height="5" viewBox="0 0 8 5"><path d="M0.6 0.6 L4 4 L7.4 0.6" fill="none" stroke="#787878" stroke-width="1.15"/></svg>
<svg style="left:373px;top:183px" width="8" height="12" viewBox="0 0 8 12"><path d="M0.5 3.6 L3.9 0.5 L7.3 3.6 M0.5 8.5 L3.9 11.6 L7.3 8.5" fill="none" stroke="#686868" stroke-width="1.15"/></svg>
<div style="left:342px;top:198px;width:26px;height:16px;background:#fdf6e4;"></div>
<div style="left:17px;top:214px;width:524px;height:1px;background:#e9e9e9;"></div>
<div style="left:85px;top:198px;width:1px;height:17px;background:#e9e9e9;"></div>
<div style="left:193px;top:198px;width:1px;height:17px;background:#e9e9e9;"></div>
<div style="left:340px;top:198px;width:1px;height:17px;background:#e9e9e9;"></div>
<div style="left:384px;top:198px;width:1px;height:17px;background:#e9e9e9;"></div>
<div style="left:492px;top:198px;width:1px;height:17px;background:#e9e9e9;"></div>
<svg style="left:47px;top:200px" width="11" height="11" viewBox="0 0 11 11"><rect x="0.5" y="0.5" width="10" height="10" fill="#fff" stroke="#9c9c9c" stroke-width="1"/></svg>
<span class="t" style="left:90px;top:198px;height:16px;line-height:16px;font-size:12px;color:#282828;transform:scaleX(0.88);transform-origin:0 0;">Ladeliste</span>
<span class="t" style="left:198px;top:198px;height:16px;line-height:16px;font-size:12px;color:#282828;transform:scaleX(0.88);transform-origin:0 0;">Ladeliste</span>
<span class="t" style="left:346px;top:198px;height:16px;line-height:16px;font-size:12px;color:#282828;transform:scaleX(1.0);transform-origin:100% 0;text-align:right;width:19px;">1</span>
<svg style="left:330px;top:204px" width="8" height="5" viewBox="0 0 8 5"><path d="M0.6 0.6 L4 4 L7.4 0.6" fill="none" stroke="#787878" stroke-width="1.15"/></svg>
<svg style="left:373px;top:200px" width="8" height="12" viewBox="0 0 8 12"><path d="M0.5 3.6 L3.9 0.5 L7.3 3.6 M0.5 8.5 L3.9 11.6 L7.3 8.5" fill="none" stroke="#686868" stroke-width="1.15"/></svg>
<div style="left:342px;top:215px;width:26px;height:16px;background:#fdf6e4;"></div>
<div style="left:17px;top:231px;width:524px;height:1px;background:#e9e9e9;"></div>
<div style="left:85px;top:215px;width:1px;height:17px;background:#e9e9e9;"></div>
<div style="left:193px;top:215px;width:1px;height:17px;background:#e9e9e9;"></div>
<div style="left:340px;top:215px;width:1px;height:17px;background:#e9e9e9;"></div>
<div style="left:384px;top:215px;width:1px;height:17px;background:#e9e9e9;"></div>
<div style="left:492px;top:215px;width:1px;height:17px;background:#e9e9e9;"></div>
<svg style="left:47px;top:217px" width="11" height="11" viewBox="0 0 11 11"><rect x="0.5" y="0.5" width="10" height="10" fill="#fff" stroke="#9c9c9c" stroke-width="1"/></svg>
<span class="t" style="left:90px;top:215px;height:16px;line-height:16px;font-size:12px;color:#282828;transform:scaleX(0.88);transform-origin:0 0;">Lieferschein</span>
<span class="t" style="left:198px;top:215px;height:16px;line-height:16px;font-size:12px;color:#282828;transform:scaleX(0.88);transform-origin:0 0;">Lieferschein</span>
<span class="t" style="left:346px;top:215px;height:16px;line-height:16px;font-size:12px;color:#282828;transform:scaleX(1.0);transform-origin:100% 0;text-align:right;width:19px;">1</span>
<svg style="left:330px;top:221px" width="8" height="5" viewBox="0 0 8 5"><path d="M0.6 0.6 L4 4 L7.4 0.6" fill="none" stroke="#787878" stroke-width="1.15"/></svg>
<svg style="left:373px;top:217px" width="8" height="12" viewBox="0 0 8 12"><path d="M0.5 3.6 L3.9 0.5 L7.3 3.6 M0.5 8.5 L3.9 11.6 L7.3 8.5" fill="none" stroke="#686868" stroke-width="1.15"/></svg>
<div style="left:342px;top:232px;width:26px;height:16px;background:#fdf6e4;"></div>
<div style="left:17px;top:248px;width:524px;height:1px;background:#e9e9e9;"></div>
<div style="left:85px;top:232px;width:1px;height:17px;background:#e9e9e9;"></div>
<div style="left:193px;top:232px;width:1px;height:17px;background:#e9e9e9;"></div>
<div style="left:340px;top:232px;width:1px;height:17px;background:#e9e9e9;"></div>
<div style="left:384px;top:232px;width:1px;height:17px;background:#e9e9e9;"></div>
<div style="left:492px;top:232px;width:1px;height:17px;background:#e9e9e9;"></div>
<svg style="left:47px;top:234px" width="11" height="11" viewBox="0 0 11 11"><rect x="0.5" y="0.5" width="10" height="10" fill="#fff" stroke="#9c9c9c" stroke-width="1"/></svg>
<span class="t" style="left:90px;top:232px;height:16px;line-height:16px;font-size:12px;color:#282828;transform:scaleX(0.88);transform-origin:0 0;">Rechnung</span>
<span class="t" style="left:198px;top:232px;height:16px;line-height:16px;font-size:12px;color:#282828;transform:scaleX(0.88);transform-origin:0 0;">Rechnung</span>
<span class="t" style="left:346px;top:232px;height:16px;line-height:16px;font-size:12px;color:#282828;transform:scaleX(1.0);transform-origin:100% 0;text-align:right;width:19px;">1</span>
<svg style="left:330px;top:238px" width="8" height="5" viewBox="0 0 8 5"><path d="M0.6 0.6 L4 4 L7.4 0.6" fill="none" stroke="#787878" stroke-width="1.15"/></svg>
<svg style="left:373px;top:234px" width="8" height="12" viewBox="0 0 8 12"><path d="M0.5 3.6 L3.9 0.5 L7.3 3.6 M0.5 8.5 L3.9 11.6 L7.3 8.5" fill="none" stroke="#686868" stroke-width="1.15"/></svg>
<div style="left:342px;top:249px;width:26px;height:16px;background:#fdf6e4;"></div>
<div style="left:17px;top:265px;width:524px;height:1px;background:#e9e9e9;"></div>
<div style="left:85px;top:249px;width:1px;height:17px;background:#e9e9e9;"></div>
<div style="left:193px;top:249px;width:1px;height:17px;background:#e9e9e9;"></div>
<div style="left:340px;top:249px;width:1px;height:17px;background:#e9e9e9;"></div>
<div style="left:384px;top:249px;width:1px;height:17px;background:#e9e9e9;"></div>
<div style="left:492px;top:249px;width:1px;height:17px;background:#e9e9e9;"></div>
<svg style="left:47px;top:251px" width="11" height="11" viewBox="0 0 11 11"><rect x="0.5" y="0.5" width="10" height="10" fill="#fff" stroke="#9c9c9c" stroke-width="1"/></svg>
<span class="t" style="left:90px;top:249px;height:16px;line-height:16px;font-size:12px;color:#282828;transform:scaleX(0.88);transform-origin:0 0;">Vorkalkulation</span>
<span class="t" style="left:198px;top:249px;height:16px;line-height:16px;font-size:12px;color:#282828;transform:scaleX(0.88);transform-origin:0 0;">Vorkalkulation</span>
<span class="t" style="left:346px;top:249px;height:16px;line-height:16px;font-size:12px;color:#282828;transform:scaleX(1.0);transform-origin:100% 0;text-align:right;width:19px;">1</span>
<svg style="left:330px;top:255px" width="8" height="5" viewBox="0 0 8 5"><path d="M0.6 0.6 L4 4 L7.4 0.6" fill="none" stroke="#787878" stroke-width="1.15"/></svg>
<svg style="left:373px;top:251px" width="8" height="12" viewBox="0 0 8 12"><path d="M0.5 3.6 L3.9 0.5 L7.3 3.6 M0.5 8.5 L3.9 11.6 L7.3 8.5" fill="none" stroke="#686868" stroke-width="1.15"/></svg>
<div style="left:342px;top:266px;width:26px;height:16px;background:#fdf6e4;"></div>
<div style="left:17px;top:282px;width:524px;height:1px;background:#e9e9e9;"></div>
<div style="left:85px;top:266px;width:1px;height:17px;background:#e9e9e9;"></div>
<div style="left:193px;top:266px;width:1px;height:17px;background:#e9e9e9;"></div>
<div style="left:340px;top:266px;width:1px;height:17px;background:#e9e9e9;"></div>
<div style="left:384px;top:266px;width:1px;height:17px;background:#e9e9e9;"></div>
<div style="left:492px;top:266px;width:1px;height:17px;background:#e9e9e9;"></div>
<svg style="left:47px;top:268px" width="11" height="11" viewBox="0 0 11 11"><rect x="0.5" y="0.5" width="10" height="10" fill="#fff" stroke="#8f8f8f" stroke-width="1"/><path d="M2.4 5.5 L4.6 7.8 L8.7 3.2" fill="none" stroke="#686868" stroke-width="1.5"/></svg>
<span class="t" style="left:90px;top:266px;height:16px;line-height:16px;font-size:12px;color:#282828;transform:scaleX(0.88);transform-origin:0 0;">Designauswahl</span>
<span class="t" style="left:198px;top:266px;height:16px;line-height:16px;font-size:12px;color:#282828;transform:scaleX(0.88);transform-origin:0 0;">Designauswahl</span>
<span class="t" style="left:346px;top:266px;height:16px;line-height:16px;font-size:12px;color:#282828;transform:scaleX(1.0);transform-origin:100% 0;text-align:right;width:19px;">1</span>
<svg style="left:330px;top:272px" width="8" height="5" viewBox="0 0 8 5"><path d="M0.6 0.6 L4 4 L7.4 0.6" fill="none" stroke="#787878" stroke-width="1.15"/></svg>
<svg style="left:373px;top:268px" width="8" height="12" viewBox="0 0 8 12"><path d="M0.5 3.6 L3.9 0.5 L7.3 3.6 M0.5 8.5 L3.9 11.6 L7.3 8.5" fill="none" stroke="#686868" stroke-width="1.15"/></svg>
<div style="left:342px;top:283px;width:26px;height:16px;background:#fdf6e4;"></div>
<div style="left:17px;top:299px;width:524px;height:1px;background:#e9e9e9;"></div>
<div style="left:85px;top:283px;width:1px;height:17px;background:#e9e9e9;"></div>
<div style="left:193px;top:283px;width:1px;height:17px;background:#e9e9e9;"></div>
<div style="left:340px;top:283px;width:1px;height:17px;background:#e9e9e9;"></div>
<div style="left:384px;top:283px;width:1px;height:17px;background:#e9e9e9;"></div>
<div style="left:492px;top:283px;width:1px;height:17px;background:#e9e9e9;"></div>
<svg style="left:47px;top:285px" width="11" height="11" viewBox="0 0 11 11"><rect x="0.5" y="0.5" width="10" height="10" fill="#fff" stroke="#8f8f8f" stroke-width="1"/><path d="M2.4 5.5 L4.6 7.8 L8.7 3.2" fill="none" stroke="#686868" stroke-width="1.5"/></svg>
<span class="t" style="left:90px;top:283px;height:16px;line-height:16px;font-size:12px;color:#282828;transform:scaleX(0.835);transform-origin:0 0;">Grundriss</span>
<span class="t" style="left:198px;top:283px;height:16px;line-height:16px;font-size:12px;color:#282828;transform:scaleX(0.835);transform-origin:0 0;">Grundriss</span>
<span class="t" style="left:346px;top:283px;height:16px;line-height:16px;font-size:12px;color:#282828;transform:scaleX(1.0);transform-origin:100% 0;text-align:right;width:19px;">1</span>
<svg style="left:330px;top:289px" width="8" height="5" viewBox="0 0 8 5"><path d="M0.6 0.6 L4 4 L7.4 0.6" fill="none" stroke="#787878" stroke-width="1.15"/></svg>
<svg style="left:373px;top:285px" width="8" height="12" viewBox="0 0 8 12"><path d="M0.5 3.6 L3.9 0.5 L7.3 3.6 M0.5 8.5 L3.9 11.6 L7.3 8.5" fill="none" stroke="#686868" stroke-width="1.15"/></svg>
</div>
<svg style="left:620px;top:331px" width="7" height="10" viewBox="0 0 7 10"><path d="M0.3 0.6 L5 5 L0.3 9.4 Z" fill="#686868"/></svg>
<div style="left:640px;top:528px;width:363px;height:22px;border:5px solid #d3db26;border-radius:7px;"></div>
<div style="left:1163px;top:283px;width:2px;height:176px;background:#6a6a6a;"></div>
<div style="left:631px;top:566px;width:481px;height:2px;background:#6a6a6a;"></div>
</div>
<div id="strip"><i></i></div>
</body></html>
